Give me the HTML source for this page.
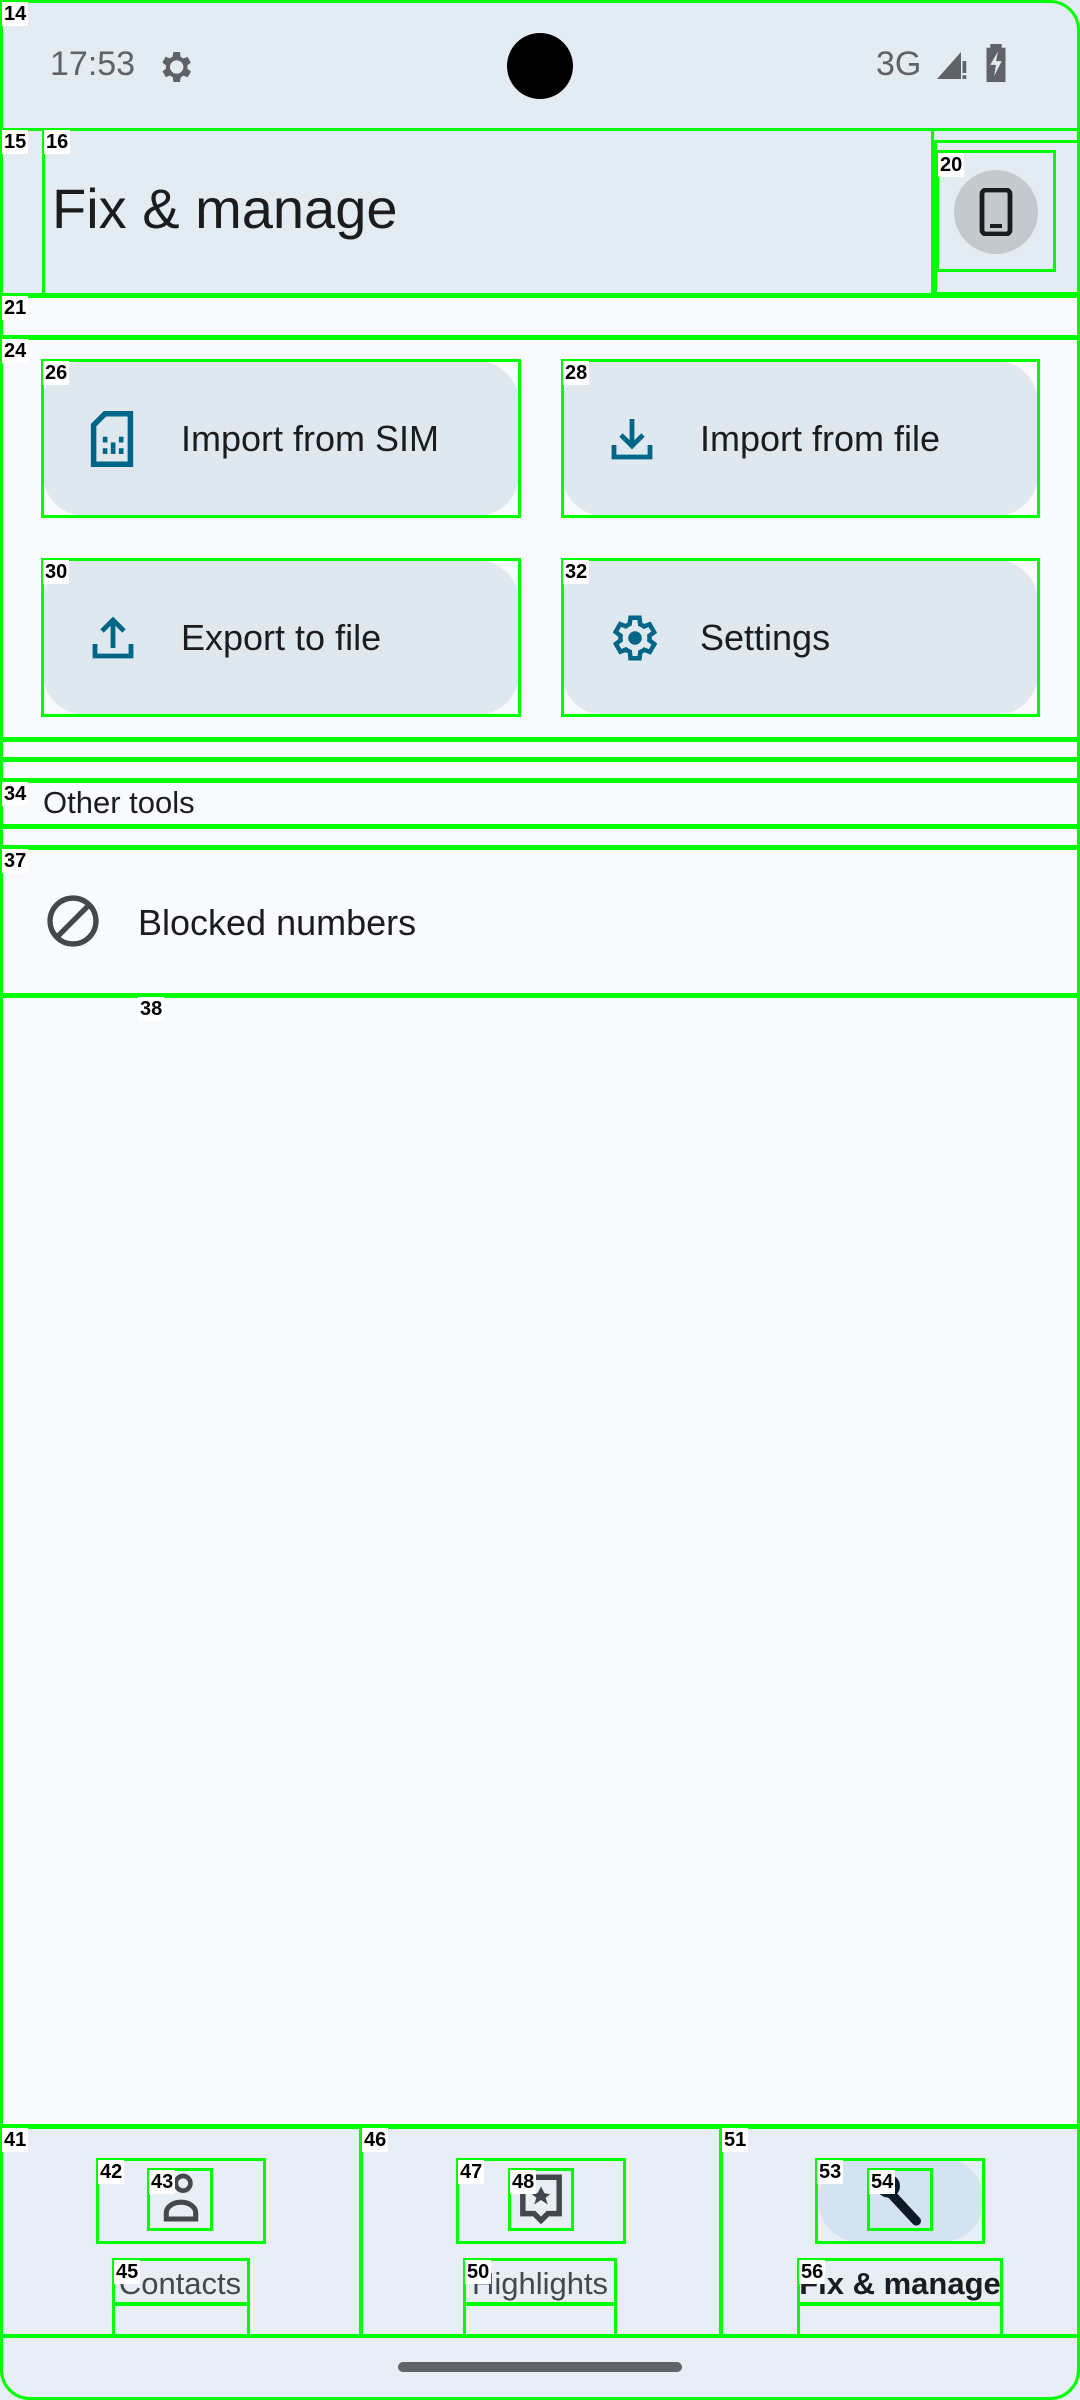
<!DOCTYPE html>
<html><head><meta charset="utf-8"><style>
*{margin:0;padding:0;box-sizing:border-box}
body{width:1080px;height:2400px;position:relative;background:#f9fafd;font-family:"Liberation Sans",sans-serif;overflow:hidden}
.a{position:absolute}
.g{position:absolute;border:3px solid #00ff00}
.l{position:absolute;background:#fff;color:#000;font-size:20px;font-weight:bold;padding:0 2px;line-height:24px}
.tile{position:absolute;background:#dfe8ef;border-radius:42px;width:476px;height:155px}
.tile span{position:absolute;left:138px;top:50%;transform:translateY(-50%);font-size:36px;color:#1b1c1e}
.tile svg{position:absolute;left:46px;top:50%;transform:translateY(-50%)}
.nl{position:absolute;top:2266px;font-size:31px;color:#44474b;text-align:center;width:236px}
</style></head><body>
<div class="a" style="left:0;top:0;width:1080px;height:295px;background:#e4ecf3"></div>
<div class="a" style="left:50px;top:45px;font-size:34px;color:#5f6368">17:53</div>
<svg class="a" style="left:155px;top:47px" width="40" height="40" viewBox="0 0 24 24"><path fill="#5f6368" d="M19.4 13a7.5 7.5 0 000-2l2.1-1.6-2-3.5-2.5 1a7 7 0 00-1.7-1L15 3h-4l-.4 2.8a7 7 0 00-1.7 1l-2.5-1-2 3.5L6.6 11a7.5 7.5 0 000 2l-2.1 1.6 2 3.5 2.5-1a7 7 0 001.7 1L11 21h4l.4-2.8a7 7 0 001.7-1l2.5 1 2-3.5zM13 16a4 4 0 110-8 4 4 0 010 8z"/></svg>
<div class="a" style="left:507px;top:33px;width:66px;height:66px;border-radius:50%;background:#000"></div>
<div class="a" style="left:876px;top:45px;font-size:34px;color:#5f6368">3G</div>
<svg class="a" style="left:934px;top:46px" width="36" height="36" viewBox="0 0 24 24"><path fill="#5f6368" d="M2 22L18 4v18z"/><rect x="19" y="10" width="2.5" height="8" fill="#5f6368"/><rect x="19" y="19.5" width="2.5" height="2.5" fill="#5f6368"/></svg>
<svg class="a" style="left:984px;top:44px" width="24" height="38" viewBox="0 0 12 20"><path fill="#5f6368" d="M3 0h6v2h2v18H1V2h2z"/><path fill="#e4ecf3" d="M7 4L3 11h3l-1 6 4-8H6z"/></svg>
<div class="a" style="left:52px;top:176px;font-size:56px;color:#1b1c1e">Fix &amp; manage</div>
<div class="a" style="left:954px;top:170px;width:84px;height:84px;border-radius:50%;background:#c4c9ce"></div>
<svg class="a" style="left:978px;top:188px" width="36" height="48" viewBox="0 0 18 24"><rect x="2" y="1" width="14" height="22" rx="2" fill="none" stroke="#1b1c1e" stroke-width="2.4"/><rect x="6" y="18" width="6" height="2" fill="#1b1c1e"/></svg>

<div class="tile" style="left:43px;top:361px"><svg width="46" height="56" viewBox="0 0 20 24"><path d="M7 1h11v22H2V6z" fill="none" stroke="#006687" stroke-width="2.4"/><g fill="#006687"><rect x="6" y="11" width="2" height="2.5"/><rect x="6" y="16" width="2" height="2.5"/><rect x="9.5" y="13.5" width="2" height="2.5"/><rect x="9.5" y="16" width="2" height="2.5"/><rect x="13" y="11" width="2" height="2.5"/><rect x="13" y="16" width="2" height="2.5"/></g></svg><span>Import from SIM</span></div>
<div class="tile" style="left:562px;top:361px"><svg width="48" height="48" viewBox="0 0 24 24"><path d="M12 2v13M6.5 10l5.5 5.5 5.5-5.5M3 15v6h18v-6" fill="none" stroke="#006687" stroke-width="2.4"/></svg><span>Import from file</span></div>
<div class="tile" style="left:43px;top:560px"><svg width="48" height="48" viewBox="0 0 24 24"><path d="M12 17V3M6.5 8.5L12 3l5.5 5.5M3 15v6h18v-6" fill="none" stroke="#006687" stroke-width="2.4"/></svg><span>Export to file</span></div>
<div class="tile" style="left:562px;top:560px"><svg width="54" height="54" viewBox="0 0 24 24"><path fill="none" stroke="#006687" stroke-width="2" d="M19.4 13a7.5 7.5 0 000-2l2.1-1.6-2-3.5-2.5 1a7 7 0 00-1.7-1L15 3h-4l-.4 2.8a7 7 0 00-1.7 1l-2.5-1-2 3.5L6.6 11a7.5 7.5 0 000 2l-2.1 1.6 2 3.5 2.5-1a7 7 0 001.7 1L11 21h4l.4-2.8a7 7 0 001.7-1l2.5 1 2-3.5z" transform="translate(-1 0)"/><circle cx="12" cy="12" r="3" fill="#006687"/></svg><span>Settings</span></div>

<div class="a" style="left:43px;top:785px;font-size:31px;color:#1b1c1e">Other tools</div>
<svg class="a" style="left:44px;top:892px" width="58" height="58" viewBox="0 0 24 24"><circle cx="12" cy="12" r="9.5" fill="none" stroke="#44474b" stroke-width="2.2"/><path d="M5.5 18.5L18.5 5.5" stroke="#44474b" stroke-width="2.2"/></svg>
<div class="a" style="left:138px;top:902px;font-size:36px;color:#1b1c1e">Blocked numbers</div>

<div class="a" style="left:0;top:2126px;width:1080px;height:274px;background:#e7eef5"></div>
<div class="a" style="left:818px;top:2158px;width:166px;height:84px;border-radius:42px;background:#d3e3f1"></div>
<svg class="a" style="left:160px;top:2172px" width="42" height="52" viewBox="0 0 20 24"><circle cx="11" cy="5" r="3.5" fill="none" stroke="#44474b" stroke-width="2.2"/><path d="M3 22v-3a7 5 0 0114 0v3z" fill="none" stroke="#44474b" stroke-width="2.4"/></svg>
<svg class="a" style="left:516px;top:2172px" width="50" height="56" viewBox="0 0 22 24"><path d="M3 2h16v16h-5l-3 3-3-3H3z" fill="none" stroke="#44474b" stroke-width="2.4"/><path d="M11 6l1.5 3 2.5.5-2 1.5 1 3-3-2-3 2 1-3-2-1.5 2.5-.5z" fill="#44474b"/></svg>
<svg class="a" style="left:870px;top:2172px" width="60" height="56" viewBox="0 0 24 24"><circle cx="7" cy="6" r="5" fill="#0d1b26"/><path d="M6 7l13 14" stroke="#0d1b26" stroke-width="4" stroke-linecap="round"/></svg>
<div class="nl" style="left:62px">Contacts</div>
<div class="nl" style="left:422px">Highlights</div>
<div class="nl" style="left:782px;font-weight:bold;color:#1b1c1e">Fix &amp; manage</div>
<div class="a" style="left:398px;top:2362px;width:284px;height:10px;border-radius:5px;background:#5f6368"></div>

<div class="g" style="left:0;top:0;width:1080px;height:2400px;border-radius:0 30px 30px 30px"></div>
<div class="g" style="left:0;top:128px;width:1080px;height:168px"></div>
<div class="g" style="left:42px;top:128px;width:892px;height:168px"></div>
<div class="g" style="left:934px;top:140px;width:146px;height:155px"></div>
<div class="g" style="left:936px;top:150px;width:120px;height:122px"></div>
<div class="g" style="left:0;top:295px;width:1080px;height:43px"></div>
<div class="g" style="left:0;top:337px;width:1080px;height:403px"></div>
<div class="g" style="left:41px;top:359px;width:480px;height:159px"></div>
<div class="g" style="left:561px;top:359px;width:479px;height:159px"></div>
<div class="g" style="left:41px;top:558px;width:480px;height:159px"></div>
<div class="g" style="left:561px;top:558px;width:479px;height:159px"></div>
<div class="g" style="left:0;top:739px;width:1080px;height:21px"></div>
<div class="g" style="left:0;top:759px;width:1080px;height:22px"></div>
<div class="g" style="left:0;top:780px;width:1080px;height:47px"></div>
<div class="g" style="left:0;top:826px;width:1080px;height:22px"></div>
<div class="g" style="left:0;top:847px;width:1080px;height:149px"></div>
<div class="g" style="left:0;top:995px;width:1080px;height:1132px"></div>
<div class="g" style="left:0;top:2126px;width:362px;height:211px"></div>
<div class="g" style="left:360px;top:2126px;width:362px;height:211px"></div>
<div class="g" style="left:720px;top:2126px;width:360px;height:211px"></div>
<div class="g" style="left:96px;top:2158px;width:170px;height:86px"></div>
<div class="g" style="left:147px;top:2168px;width:66px;height:63px"></div>
<div class="g" style="left:456px;top:2158px;width:170px;height:86px"></div>
<div class="g" style="left:508px;top:2168px;width:66px;height:63px"></div>
<div class="g" style="left:815px;top:2158px;width:170px;height:86px"></div>
<div class="g" style="left:867px;top:2168px;width:66px;height:63px"></div>
<div class="g" style="left:112px;top:2258px;width:138px;height:47px"></div>
<div class="g" style="left:112px;top:2303px;width:138px;height:34px"></div>
<div class="g" style="left:463px;top:2258px;width:154px;height:47px"></div>
<div class="g" style="left:463px;top:2303px;width:154px;height:34px"></div>
<div class="g" style="left:797px;top:2258px;width:206px;height:47px"></div>
<div class="g" style="left:797px;top:2303px;width:206px;height:34px"></div>
<div class="g" style="left:0;top:2335px;width:1080px;height:65px;border-radius:0 0 30px 30px"></div>

<div class="l" style="left:2px;top:2px">14</div>
<div class="l" style="left:2px;top:130px">15</div>
<div class="l" style="left:44px;top:130px">16</div>
<div class="l" style="left:938px;top:153px">20</div>
<div class="l" style="left:2px;top:296px">21</div>
<div class="l" style="left:2px;top:339px">24</div>
<div class="l" style="left:43px;top:361px">26</div>
<div class="l" style="left:563px;top:361px">28</div>
<div class="l" style="left:43px;top:560px">30</div>
<div class="l" style="left:563px;top:560px">32</div>
<div class="l" style="left:2px;top:782px">34</div>
<div class="l" style="left:2px;top:849px">37</div>
<div class="l" style="left:138px;top:997px">38</div>
<div class="l" style="left:2px;top:2128px">41</div>
<div class="l" style="left:98px;top:2160px">42</div>
<div class="l" style="left:149px;top:2170px">43</div>
<div class="l" style="left:114px;top:2260px">45</div>
<div class="l" style="left:362px;top:2128px">46</div>
<div class="l" style="left:458px;top:2160px">47</div>
<div class="l" style="left:510px;top:2170px">48</div>
<div class="l" style="left:465px;top:2260px">50</div>
<div class="l" style="left:722px;top:2128px">51</div>
<div class="l" style="left:817px;top:2160px">53</div>
<div class="l" style="left:869px;top:2170px">54</div>
<div class="l" style="left:799px;top:2260px">56</div>
</body></html>
